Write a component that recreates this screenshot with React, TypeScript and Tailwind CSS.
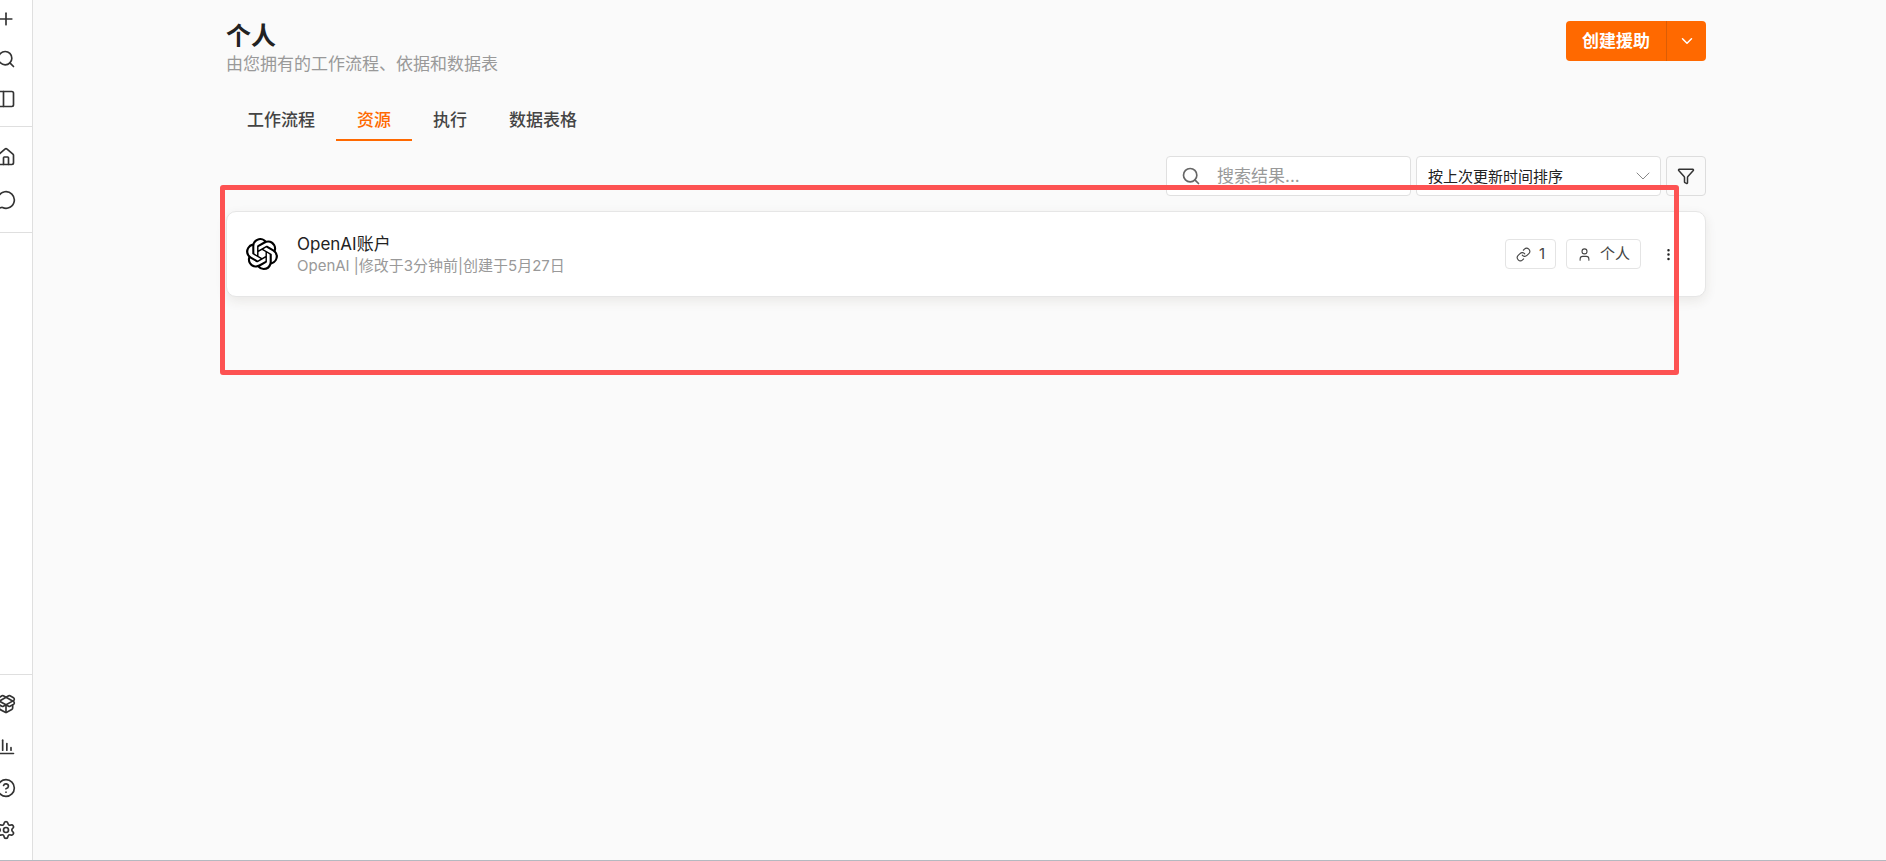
import { useState } from 'react'
import {
  ChartColumnDecreasing,
  ChevronDown,
  CircleQuestionMark,
  EllipsisVertical,
  Funnel,
  House,
  Link,
  MessageCircle,
  PackageOpen,
  PanelLeft,
  Plus,
  Search,
  Settings,
  User
} from 'lucide-react'
import { SiOpenai } from 'react-icons/si'

const tabs = ['工作流程', '资源', '执行', '数据表格']

const RailButton = ({ icon: Icon, label }: any) => (
  <button aria-label={label} className="block text-[#333333]">
    <Icon size={20} strokeWidth={2} />
  </button>
)

const Chip = ({ icon: Icon, children }: any) => (
  <span className="flex h-[30px] items-center gap-2 rounded border border-[#e4e4e4] px-[10px] text-[15px] text-[#444444]">
    <Icon size={15} strokeWidth={1.75} />
    {children}
  </span>
)

// Narrow rail, scrolled partly under the left edge of the window
const Sidebar = () => (
  <aside className="flex w-[33px] shrink-0 flex-col justify-between overflow-hidden border-r border-[#dfdfdf] bg-white">
    <div>
      <div className="border-b border-[#dfdfdf] pt-[9px] pb-[17px]">
        <div className="-ml-5 flex flex-col items-center gap-5">
          <RailButton icon={Plus} label="新建" />
          <RailButton icon={Search} label="搜索" />
          <RailButton icon={PanelLeft} label="侧边栏" />
        </div>
      </div>
      <nav className="border-b border-[#dfdfdf] pt-5 pb-[22px]">
        <div className="-ml-5 flex flex-col items-center gap-[23px]">
          <RailButton icon={House} label="主页" />
          <RailButton icon={MessageCircle} label="聊天" />
        </div>
      </nav>
    </div>
    <div className="border-t border-[#dfdfdf] pt-[19px] pb-5">
      <div className="-ml-5 flex flex-col items-center gap-[22px]">
        <RailButton icon={PackageOpen} label="模板" />
        <RailButton icon={ChartColumnDecreasing} label="统计" />
        <RailButton icon={CircleQuestionMark} label="帮助" />
        <RailButton icon={Settings} label="设置" />
      </div>
    </div>
  </aside>
)

export default function App() {
  const [activeTab, setActiveTab] = useState('资源')
  const [query, setQuery] = useState('')

  return (
    <div className="flex min-h-screen border-b border-[#b4b9c0] bg-[#fafafa] font-['Inter','Noto_Sans_CJK_SC',sans-serif] text-[#222222]">
      <Sidebar />
      <main className="min-w-0 flex-1 pl-[13px]">
        <div className="mx-auto max-w-[1480px] pt-[21px]">
          {/* Header */}
          <header className="flex items-start justify-between">
            <div>
              <h1 className="text-[25px] leading-[31px] font-bold">个人</h1>
              <p className="text-[17px] leading-[25px] text-[#999999]">由您拥有的工作流程、依据和数据表</p>
            </div>
            <div className="flex h-10 overflow-hidden rounded bg-[#ff6900] text-white">
              <button className="px-4 pt-0.5 text-[17px] font-bold">创建援助</button>
              <button aria-label="更多" className="flex w-10 items-center justify-center border-l border-[#dc5d05]">
                <ChevronDown size={18} />
              </button>
            </div>
          </header>

          {/* Tabs */}
          <div role="tablist" className="mt-[31px] flex">
            {tabs.map((tab) => (
              <button
                key={tab}
                role="tab"
                aria-selected={tab === activeTab}
                onClick={() => setActiveTab(tab)}
                className={`border-b-2 px-[21px] pb-[7px] text-[17px] leading-6 font-medium ${
                  tab === activeTab ? 'border-[#ff6900] text-[#ff6900]' : 'border-transparent text-[#444444]'
                }`}
              >
                {tab}
              </button>
            ))}
          </div>

          {/* Filters */}
          <div className="mt-[15px] flex justify-end gap-[5px]">
            <label className="flex h-10 w-[245px] items-center gap-4 rounded border border-[#e0e0e0] bg-white px-[14px]">
              <Search size={20} strokeWidth={2} className="shrink-0 text-[#666666]" />
              <input
                aria-label="搜索结果"
                value={query}
                onChange={(e) => setQuery(e.target.value)}
                placeholder="搜索结果..."
                className="min-w-0 flex-1 pt-0.5 text-[17px] outline-none placeholder:text-[#999999]"
              />
            </label>
            <div className="relative">
              <select
                aria-label="排序"
                className="h-10 w-[245px] appearance-none rounded border border-[#e0e0e0] bg-white px-[11px] pt-0.5 text-[15px] outline-none"
              >
                <option>按上次更新时间排序</option>
              </select>
              <ChevronDown
                size={24}
                strokeWidth={1}
                className="pointer-events-none absolute top-2 right-[6px] text-[#888888]"
              />
            </div>
            <button
              aria-label="筛选"
              className="flex h-10 w-10 items-center justify-center rounded border border-[#dddddd]"
            >
              <Funnel size={18} strokeWidth={2} className="text-[#333333]" />
            </button>
          </div>

          {/* Credentials */}
          <section className="relative mt-[15px]">
            <article className="flex items-center gap-[19px] rounded-[10px] border border-[#e6e6e6] bg-white px-[19px] py-5 shadow-[0_4px_12px_rgba(70,50,30,0.09)]">
              <SiOpenai size={32} className="shrink-0 text-black" />
              <div className="flex-1 pt-0.5">
                <h2 className="text-[17px] leading-[21px]">OpenAI账户</h2>
                <p className="text-[15px] leading-[21px] text-[#999999]">OpenAI |修改于3分钟前|创建于5月27日</p>
              </div>
              <div className="flex items-center gap-[10px]">
                <Chip icon={Link}>1</Chip>
                <Chip icon={User}>个人</Chip>
                <button aria-label="操作" className="px-[10px] text-[#222222]">
                  <EllipsisVertical size={15} strokeWidth={2} />
                </button>
              </div>
            </article>
            <div className="pointer-events-none absolute -top-[26px] right-[27px] -left-[6px] h-[190px] rounded-[3px] border-[5px] border-[#fd5252]" />
          </section>
        </div>
      </main>
    </div>
  )
}
